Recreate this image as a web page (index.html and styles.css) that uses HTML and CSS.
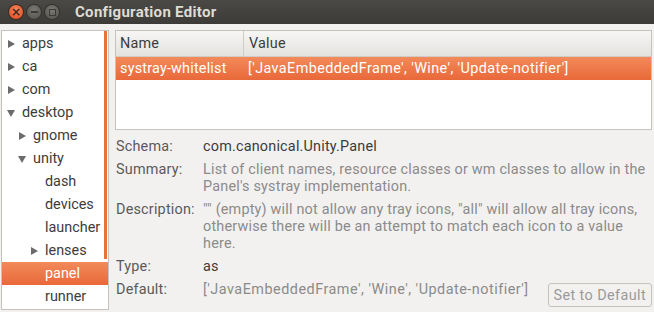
FILE: index.html
```html
<!DOCTYPE html>
<html>
<head>
  <title>Configuration Editor</title>
  <link rel="stylesheet" href="styles.css">
</head>
<body>
  <div id="window">
    <div id="titlebar">
      <div class="win-button close"><span>&#215;</span></div>
      <div class="win-button minimize"><span class="dash-mark"></span></div>
      <div class="win-button maximize"><span class="box-mark"></span></div>
      <div id="title">Configuration Editor</div>
    </div>
    <div id="main">
      <div id="tree">
        <div class="tree-row lvl0"><span class="arrow closed"></span>apps</div>
        <div class="tree-row lvl0"><span class="arrow closed"></span>ca</div>
        <div class="tree-row lvl0"><span class="arrow closed"></span>com</div>
        <div class="tree-row lvl0"><span class="arrow open"></span>desktop</div>
        <div class="tree-row lvl1"><span class="arrow closed"></span>gnome</div>
        <div class="tree-row lvl1"><span class="arrow open"></span>unity</div>
        <div class="tree-row lvl2"><span class="arrow none"></span>dash</div>
        <div class="tree-row lvl2"><span class="arrow none"></span>devices</div>
        <div class="tree-row lvl2"><span class="arrow none"></span>launcher</div>
        <div class="tree-row lvl2"><span class="arrow closed"></span>lenses</div>
        <div class="tree-row lvl2 selected"><span class="arrow none"></span>panel</div>
        <div class="tree-row lvl2"><span class="arrow none"></span>runner</div>
        <div id="scroll-indicator"></div>
      </div>
      <div id="details">
        <div id="keys">
          <div class="keys-header">
            <div class="col-name">Name</div>
            <div class="col-value">Value</div>
          </div>
          <div class="keys-row selected">
            <div class="col-name">systray-whitelist</div>
            <div class="col-value">['JavaEmbeddedFrame', 'Wine', 'Update-notifier']</div>
          </div>
        </div>
        <div id="info">
          <div class="info-label">Schema:</div>
          <div class="info-value dark">com.canonical.Unity.Panel</div>
          <div class="info-label">Summary:</div>
          <div class="info-value">List of client names, resource classes or wm classes to allow in the<br>Panel's systray implementation.</div>
          <div class="info-label">Description:</div>
          <div class="info-value">"" (empty) will not allow any tray icons, "all" will allow all tray icons,<br>otherwise there will be an attempt to match each icon to a value<br>here.</div>
          <div class="info-label">Type:</div>
          <div class="info-value dark">as</div>
          <div class="info-label">Default:</div>
          <div class="info-value default-row">
            <span>['JavaEmbeddedFrame', 'Wine', 'Update-notifier']</span>
            <button id="set-default">Set to Default</button>
          </div>
        </div>
      </div>
    </div>
  </div>
</body>
</html>
```

FILE: styles.css
```css
html, body {
  margin: 0;
  height: 100%;
  background-color: #f2f1f0;
}
#window {
  width: 654px;
  height: 312px;
  display: flex;
  flex-direction: column;
  font-family: Roboto, 'DejaVu Sans', sans-serif;
  font-size: 14.4px;
  color: #3c3c3c;
  overflow: hidden;
}
#titlebar {
  height: 24px;
  display: flex;
  align-items: center;
  padding-left: 9px;
  background-image: linear-gradient(to bottom, #4a4945 0%, #3c3b37 100%);
}
.win-button {
  width: 14px;
  height: 14px;
  border-radius: 50%;
  margin-right: 4px;
  display: flex;
  align-items: center;
  justify-content: center;
  background: radial-gradient(circle at 50% 35%, #7a7974 0%, #5c5b56 70%);
  box-shadow: 0 0 0 1px #33322e;
}
.win-button.close {
  background: radial-gradient(circle at 50% 35%, #f5875b 0%, #e5542c 75%);
  box-shadow: 0 0 0 1px #3a2a22;
}
.close span {
  color: #3c2a22;
  font-size: 12px;
  font-weight: bold;
  line-height: 14px;
  font-family: 'DejaVu Sans', sans-serif;
}
.dash-mark {
  width: 7px;
  height: 2px;
  background-color: #3c3b37;
}
.box-mark {
  width: 5px;
  height: 5px;
  border: 1px solid #3c3b37;
}
#title {
  margin-left: 12px;
  font-weight: bold;
  font-size: 15px;
  color: #dfdbd2;
  letter-spacing: 0.3px;
}
#main {
  flex: 1;
  display: flex;
  padding: 6px 2px 2px 1px;
  gap: 6px;
  min-height: 0;
}
#tree {
  position: relative;
  width: 106px;
  background-color: #fff;
  border: 1px solid #c6c3bd;
  padding-top: 1px;
  overflow: hidden;
}
.tree-row {
  height: 23px;
  line-height: 23px;
  display: flex;
  align-items: center;
  white-space: nowrap;
}
.tree-row.selected {
  background-image: linear-gradient(to bottom, #f28a5a 0%, #e9683a 100%);
  color: #fff;
}
.lvl0 { padding-left: 5px; }
.lvl1 { padding-left: 16px; }
.lvl2 { padding-left: 28px; }
.arrow {
  width: 15px;
  height: 10px;
  flex: none;
  position: relative;
}
.arrow.closed::before {
  content: "";
  position: absolute;
  left: 1px;
  top: 1px;
  border-left: 7px solid #6b6b6b;
  border-top: 4px solid transparent;
  border-bottom: 4px solid transparent;
}
.arrow.open::before {
  content: "";
  position: absolute;
  left: 0;
  top: 2px;
  border-top: 7px solid #6b6b6b;
  border-left: 4px solid transparent;
  border-right: 4px solid transparent;
}
#scroll-indicator {
  position: absolute;
  right: 1px;
  top: 0;
  width: 3px;
  height: 228px;
  background-color: #e9703f;
}
#details {
  flex: 1;
  display: flex;
  flex-direction: column;
  letter-spacing: 0.2px;
}
#keys {
  height: 98px;
  background-color: #fff;
  border: 1px solid #c6c3bd;
}
.keys-header, .keys-row {
  display: flex;
  white-space: nowrap;
}
.keys-header {
  height: 25px;
  line-height: 25px;
  background-image: linear-gradient(to bottom, #f7f6f5 0%, #e4e2df 100%);
  border-bottom: 1px solid #cfccc6;
}
.keys-header .col-name {
  border-right: 1px solid #cfccc6;
}
.keys-row {
  height: 23px;
  line-height: 23px;
}
.keys-row .col-value {
  letter-spacing: 0.4px;
}
.keys-row.selected {
  background-image: linear-gradient(to bottom, #f28a5a 0%, #e9683a 100%);
  color: #fff;
}
.col-name {
  width: 123px;
  padding-left: 4px;
}
.col-value {
  padding-left: 5px;
}
#info {
  margin-top: 8px;
  display: grid;
  grid-template-columns: 87px 1fr;
  row-gap: 6px;
  line-height: 17px;
  padding-left: 1px;
}
.info-label {
  color: #5a5a5a;
}
.info-value {
  color: #8b8b8b;
  white-space: nowrap;
}
.info-value.dark {
  color: #3c3c3c;
}
.default-row {
  display: flex;
  align-items: flex-start;
  justify-content: space-between;
}
.default-row span {
  letter-spacing: 0.5px;
}
#set-default {
  font-family: inherit;
  font-size: 14.4px;
  letter-spacing: 0.4px;
  color: #9a9a9a;
  background-color: #f2f1f0;
  border: 1px solid #c6c3bd;
  border-radius: 3px;
  height: 24px;
  padding: 0 5px;
  margin-top: 2px;
}
```
